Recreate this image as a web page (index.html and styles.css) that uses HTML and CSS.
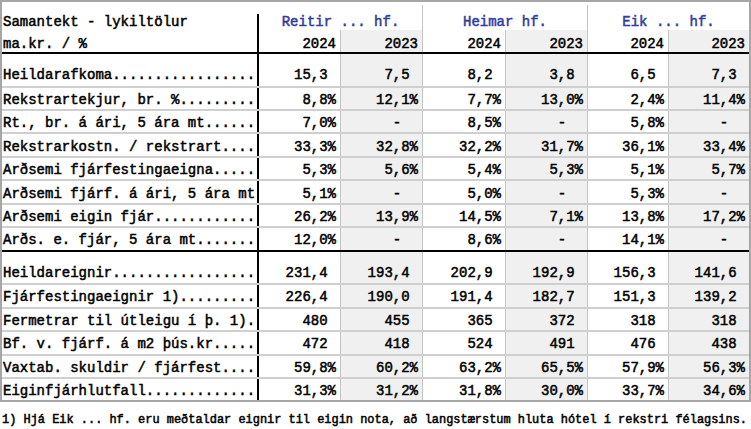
FILE: index.html
```html
<!DOCTYPE html>
<html lang="is">
<head>
<meta charset="utf-8">
<title>Samantekt - lykiltölur</title>
<link rel="stylesheet" href="styles.css">
</head>
<body>
<div class="sheet">
  <div class="row head1">
    <div class="lab">Samantekt - lykiltölur</div>
    <div class="grp">Reitir ... hf.</div>
    <div class="grp sep">Heimar hf.</div>
    <div class="grp sep">Eik ... hf.</div>
  </div>
  <div class="row head2">
    <div class="lab">ma.kr. / %</div>
    <div class="v first">2024</div><div class="v alt">2023</div>
    <div class="v">2024</div><div class="v alt">2023</div>
    <div class="v">2024</div><div class="v alt">2023</div>
  </div>

  <div class="sec">
    <div class="row data top">
      <div class="lab">Heildarafkoma.................</div>
      <div class="v first n">15,3</div><div class="v alt n">7,5</div><div class="v n">8,2</div><div class="v alt n">3,8</div><div class="v n">6,5</div><div class="v alt n">7,3</div>
    </div>
    <div class="row data">
      <div class="lab">Rekstrartekjur, br. %.........</div>
      <div class="v first">8,8%</div><div class="v alt">12,1%</div><div class="v">7,7%</div><div class="v alt">13,0%</div><div class="v">2,4%</div><div class="v alt">11,4%</div>
    </div>
    <div class="row data">
      <div class="lab">Rt., br. á ári, 5 ára mt......</div>
      <div class="v first">7,0%</div><div class="v alt d">-</div><div class="v">8,5%</div><div class="v alt d">-</div><div class="v">5,8%</div><div class="v alt d">-</div>
    </div>
    <div class="row data">
      <div class="lab">Rekstrarkostn. / rekstrart....</div>
      <div class="v first">33,3%</div><div class="v alt">32,8%</div><div class="v">32,2%</div><div class="v alt">31,7%</div><div class="v">36,1%</div><div class="v alt">33,4%</div>
    </div>
    <div class="row data">
      <div class="lab">Arðsemi fjárfestingaeigna.....</div>
      <div class="v first">5,3%</div><div class="v alt">5,6%</div><div class="v">5,4%</div><div class="v alt">5,3%</div><div class="v">5,1%</div><div class="v alt">5,7%</div>
    </div>
    <div class="row data">
      <div class="lab">Arðsemi fjárf. á ári, 5 ára mt</div>
      <div class="v first">5,1%</div><div class="v alt d">-</div><div class="v">5,0%</div><div class="v alt d">-</div><div class="v">5,3%</div><div class="v alt d">-</div>
    </div>
    <div class="row data">
      <div class="lab">Arðsemi eigin fjár............</div>
      <div class="v first">26,2%</div><div class="v alt">13,9%</div><div class="v">14,5%</div><div class="v alt">7,1%</div><div class="v">13,8%</div><div class="v alt">17,2%</div>
    </div>
    <div class="row data">
      <div class="lab">Arðs. e. fjár, 5 ára mt.......</div>
      <div class="v first">12,0%</div><div class="v alt d">-</div><div class="v">8,6%</div><div class="v alt d">-</div><div class="v">14,1%</div><div class="v alt d">-</div>
    </div>
  </div>

  <div class="sec last">
    <div class="row data top">
      <div class="lab">Heildareignir.................</div>
      <div class="v first n">231,4</div><div class="v alt n">193,4</div><div class="v n">202,9</div><div class="v alt n">192,9</div><div class="v n">156,3</div><div class="v alt n">141,6</div>
    </div>
    <div class="row data">
      <div class="lab">Fjárfestingaeignir 1).........</div>
      <div class="v first n">226,4</div><div class="v alt n">190,0</div><div class="v n">191,4</div><div class="v alt n">182,7</div><div class="v n">151,3</div><div class="v alt n">139,2</div>
    </div>
    <div class="row data">
      <div class="lab">Fermetrar til útleigu í þ. 1).</div>
      <div class="v first n">480</div><div class="v alt n">455</div><div class="v n">365</div><div class="v alt n">372</div><div class="v n">318</div><div class="v alt n">318</div>
    </div>
    <div class="row data">
      <div class="lab">Bf. v. fjárf. á m2 þús.kr.....</div>
      <div class="v first n">472</div><div class="v alt n">418</div><div class="v n">524</div><div class="v alt n">491</div><div class="v n">476</div><div class="v alt n">438</div>
    </div>
    <div class="row data">
      <div class="lab">Vaxtab. skuldir / fjárfest....</div>
      <div class="v first">59,8%</div><div class="v alt">60,2%</div><div class="v">63,2%</div><div class="v alt">65,5%</div><div class="v">57,9%</div><div class="v alt">56,3%</div>
    </div>
    <div class="row data">
      <div class="lab">Eiginfjárhlutfall.............</div>
      <div class="v first">31,3%</div><div class="v alt">31,2%</div><div class="v">31,8%</div><div class="v alt">30,0%</div><div class="v">33,7%</div><div class="v alt">34,6%</div>
    </div>
  </div>
</div>
<p class="note">1) Hjá Eik ... hf. eru meðtaldar eignir til eigin nota, að langstærstum hluta hótel í rekstri félagsins.</p>
</body>
</html>
```

FILE: styles.css
```css
* { box-sizing: border-box; }

html, body {
  margin: 0;
  padding: 0;
  background: #ffffff;
}

body {
  width: 751px;
  height: 429px;
  overflow: hidden;
  font-family: "Liberation Mono", "DejaVu Sans Mono", monospace;
  font-weight: normal;
  -webkit-text-stroke: 0.5px #000000;
  font-size: 14px;
  color: #000000;
}

.sheet {
  width: 751px;
  border: 2px solid #a6a6a6;
  padding-top: 3px;
}

.row {
  display: grid;
  grid-template-columns: 257px 81px 82px 83px 82px 81px 81px;
}

.lab {
  border-right: 2px solid #000000;
  padding-left: 1px;
  white-space: nowrap;
}

.v {
  white-space: nowrap;
  text-align: right;
  padding-right: 4px;
  border-left: 1px solid #c4c4c4;
}

.v.n { padding-right: 12.4px; }
.v.d { padding-right: 20.8px; }

.v.first { border-left: none; }

.v.alt { background: #f0f0f0; }

/* header */
.head1 {
  height: 25px;
  align-items: end;
}

.head1 .lab { padding-bottom: 0; }

.grp {
  grid-column: span 2;
  text-align: center;
  color: #2f3c9e;
  -webkit-text-stroke: 0.5px #2f3c9e;
  height: 100%;
  padding-top: 9px;
}

.grp.sep { border-left: 1px solid #c4c4c4; }

.head2 {
  height: 24px;
  border-bottom: 2px solid #000000;
}

.head2 > div { padding-top: 6px; }

/* data */
.sec {
  border-bottom: 2px solid #000000;
}

.sec.last { border-bottom: none; }

.data {
  height: 23.45px;
  border-top: 2px solid #cfcfcf;
}

.data > div {
  display: flex;
  align-items: center;
  padding-top: 3px;
}

.data .v { justify-content: flex-end; }

.data.top {
  height: 31.6px;
  border-top: none;
}

.data.top > div { padding-top: 11px; }

.note {
  margin: 10px 0 0 2px;
  font-size: 11.95px;
  line-height: 16px;
  white-space: nowrap;
}
```
